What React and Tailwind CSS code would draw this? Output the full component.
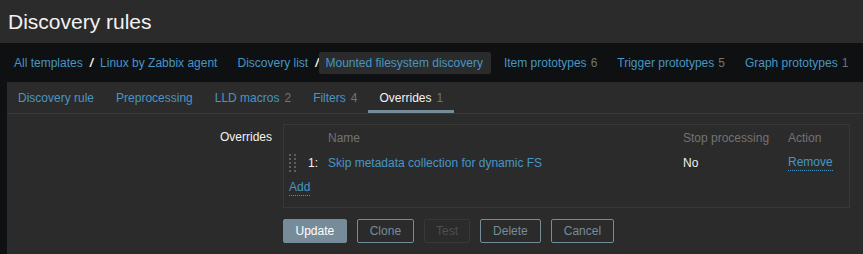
import React from "react";

const navGroups = [
  [{ label: "All templates" }, { label: "Linux by Zabbix agent" }],
  [{ label: "Discovery list" }, { label: "Mounted filesystem discovery", selected: true }],
  [{ label: "Item prototypes", count: 6 }],
  [{ label: "Trigger prototypes", count: 5 }],
  [{ label: "Graph prototypes", count: 1 }],
];

const tabs = [
  { label: "Discovery rule" },
  { label: "Preprocessing" },
  { label: "LLD macros", count: 2 },
  { label: "Filters", count: 4 },
  { label: "Overrides", count: 1, active: true },
];

function DragHandle() {
  const dots = [];
  for (let r = 0; r < 5; r++) {
    for (let c = 0; c < 2; c++) {
      dots.push(<rect key={`${r}-${c}`} x={c * 5} y={r * 4} width="2" height="2" fill="#5e5e5e" />);
    }
  }
  return (
    <svg width="7" height="18" viewBox="0 0 7 18">
      {dots}
    </svg>
  );
}

export default function App() {
  return (
    <div className="min-h-screen bg-[#0e1012] font-['Liberation_Sans',Arial,sans-serif] text-[12px] leading-[14px]">
      {/* Header */}
      <header className="h-[43px] bg-[#2b2b2b] pl-[8px] flex items-center">
        <h1 className="text-[21px] leading-[24px] text-[#f2f2f2]">Discovery rules</h1>
      </header>

      {/* Breadcrumbs */}
      <nav className="h-[39px] pl-[7px] flex items-center gap-[6px]">
        {navGroups.map((group, gi) => (
          <div key={gi} className="flex items-center">
            {group.map((item, i) => (
              <React.Fragment key={i}>
                {i > 0 && <span className="text-[#f2f2f2] font-bold italic">/</span>}
                <span
                  className={`h-[22px] flex items-center rounded-[2px] text-[#4796c4] ${
                    item.selected ? "bg-[#2b2b2b] pl-[7px] pr-[8px]" : "px-[7px]"
                  }`}
                >
                  {item.label}
                  {item.count != null && <span className="ml-[4px] text-[#737373]">{item.count}</span>}
                </span>
              </React.Fragment>
            ))}
          </div>
        ))}
      </nav>

      {/* Panel */}
      <div className="ml-[7px] bg-[#2b2b2b] min-h-[172px]">
        {/* Tabs */}
        <ul className="flex h-[32px] border-b border-[#383838]">
          {tabs.map((t) => (
            <li
              key={t.label}
              className={`px-[11px] h-[31px] flex items-center ${
                t.active ? "text-[#f2f2f2] border-b-[3px] border-[#768d99] pt-[3px]" : "text-[#4796c4]"
              }`}
            >
              {t.label}
              {t.count != null && <span className="ml-[5px] text-[#737373]">{t.count}</span>}
            </li>
          ))}
        </ul>

        {/* Form */}
        <div className="flex pt-[10px]">
          <div className="w-[265px] text-right text-[#f2f2f2] pt-[6px]">Overrides</div>
          <div className="ml-[11px]">
            <div className="w-[567px] border border-[#383838] pb-[7px]">
              <div className="grid grid-cols-[17px_22px_355px_105px_1fr]">
                {/* header */}
                <div className="h-[25px]" />
                <div className="h-[25px]" />
                <div className="h-[25px] px-[5px] flex items-center text-[#737373]">Name</div>
                <div className="h-[25px] px-[5px] flex items-center text-[#737373]">Stop processing</div>
                <div className="h-[25px] px-[5px] flex items-center text-[#737373]">Action</div>

                {/* row */}
                <div className="h-[26px] pl-[5px] flex items-center">
                  <DragHandle />
                </div>
                <div className="h-[26px] px-[5px] flex items-center justify-end text-[#f2f2f2]">1:</div>
                <div className="h-[26px] px-[5px] flex items-center text-[#4796c4]">
                  Skip metadata collection for dynamic FS
                </div>
                <div className="h-[26px] px-[5px] flex items-center text-[#f2f2f2]">No</div>
                <div className="h-[26px] px-[5px] flex items-center">
                  <span className="text-[#4796c4] border-b border-dotted border-[#4796c4] leading-[15px]">Remove</span>
                </div>
              </div>
              <div className="h-[24px] pl-[5px] flex items-center">
                <span className="text-[#4796c4] border-b border-dotted border-[#4796c4] leading-[15px]">Add</span>
              </div>
            </div>

            {/* Buttons */}
            <div className="flex gap-[10px] mt-[11px]">
              <button className="h-[24px] px-[11.5px] rounded-[2px] bg-[#768d99] border border-[#768d99] text-white">
                Update
              </button>
              <button className="h-[24px] px-[12px] rounded-[2px] border border-[#768d99] text-[#768d99]">
                Clone
              </button>
              <button className="h-[24px] px-[11px] rounded-[2px] border border-[#383838] text-[#4f4f4f]" disabled>
                Test
              </button>
              <button className="h-[24px] px-[12px] rounded-[2px] border border-[#768d99] text-[#768d99]">
                Delete
              </button>
              <button className="h-[24px] px-[12px] rounded-[2px] border border-[#768d99] text-[#768d99]">
                Cancel
              </button>
            </div>
          </div>
        </div>
      </div>
    </div>
  );
}
